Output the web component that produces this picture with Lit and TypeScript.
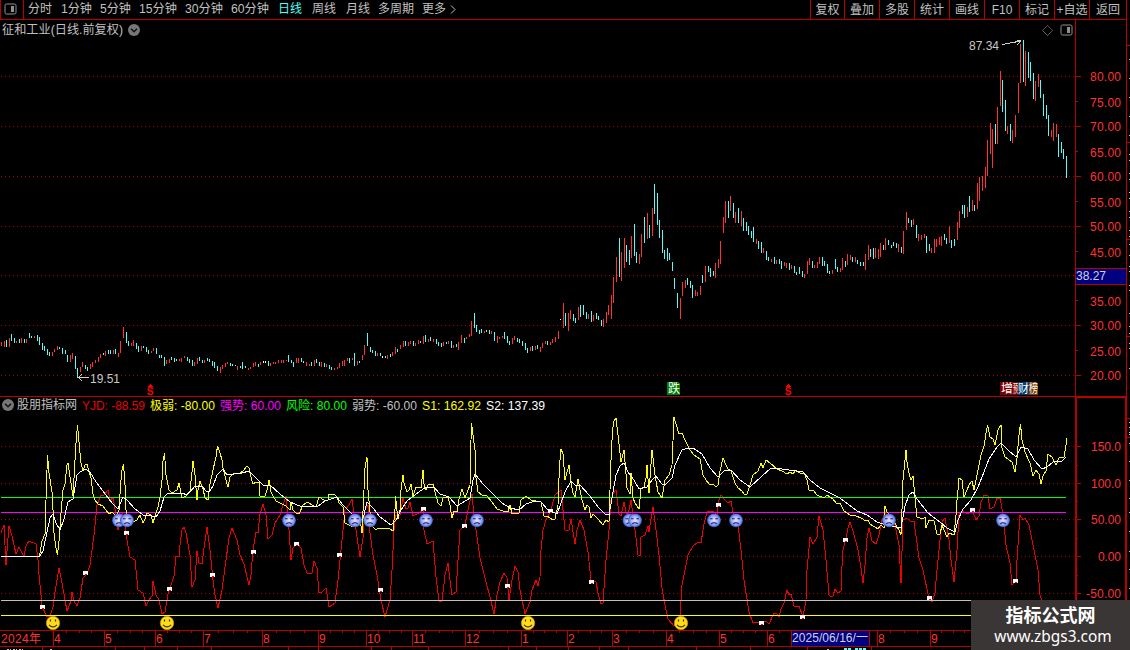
import { LitElement, css, html, svg } from "lit";
import { customElement } from "lit/decorators.js";

const FRAME = "#b80000";
const RED = "#ff3232";
const CYAN = "#54fcfc";

// One bar per session: direction, x, high, low. u = up, d = down, w = unchanged.
const BARS = `
u1,342,346 u4,341,347 d6,340,347 u9,338,347 d11,334,341 d14,338,343 u16,341,343 d19,339,343 u21,338,343 d24,339,343 u26,339,343 d29,333,338
d31,336,338 u34,336,338 d37,335,341 d39,337,345 d42,343,350 d44,346,351 d47,349,355 d49,352,356 u52,352,356 u54,349,352 u57,346,350 d59,347,349
d62,348,354 d65,350,354 d67,355,362 u70,355,362 u72,353,359 d75,356,369 d77,368,378 u80,367,372 u82,362,367 d85,365,369 d87,367,371 u90,364,369
u92,362,367 u95,360,363 u98,357,362 u100,354,358 d103,353,355 u105,351,356 d108,350,354 d110,350,354 u113,350,354 d115,349,354 u118,353,357
u120,341,353 u123,327,338 d126,332,343 d128,341,346 u131,343,346 u133,340,346 d136,343,349 d138,346,352 u141,346,351 d143,346,348 d146,347,352
d148,350,354 u151,351,353 u153,348,351 d156,348,354 d159,355,358 d161,355,358 d164,357,366 u166,360,364 u169,359,363 d171,357,360 d174,358,362
d176,359,361 u179,359,361 u181,358,362 u184,356,358 d187,357,361 d189,359,363 d192,360,366 u194,362,366 u197,358,364 d199,357,361 d202,360,363
u204,360,363 d207,358,361 d209,359,362 d212,361,366 d214,362,368 d217,366,371 u220,367,373 u222,365,369 u225,363,367 u227,362,364 d230,363,366
d232,364,366 d235,365,366 u237,366,370 d240,366,368 d242,362,369 d245,366,368 u248,368,370 u250,367,369 u253,363,367 u255,362,366 d258,364,367
u260,362,365 w263,361,363 w265,361,363 d268,361,366 u270,363,366 u273,362,364 u275,362,364 u278,360,363 u281,360,363 u283,360,363 u286,360,361
d288,355,362 d291,360,363 d293,362,367 u296,358,363 u298,358,363 d301,358,362 d303,361,363 u306,362,366 u309,364,366 d311,362,366 u314,360,366
d316,359,363 d319,362,366 u321,362,367 d324,363,367 u326,364,367 d329,365,369 d331,367,370 u334,368,370 u337,367,369 u339,363,368 u342,361,366
u344,360,366 u347,358,361 d349,358,363 u352,358,360 d354,353,366 u357,361,365 d359,361,363 u362,355,360 u364,345,355 d367,333,346 d370,347,352
d372,350,353 d375,351,356 u377,353,356 d380,353,356 w382,356,358 d385,356,358 u387,355,359 d390,354,357 u392,352,356 u395,347,354 d397,349,352
u400,345,349 u403,341,347 d405,341,346 u408,342,346 u410,341,344 d413,341,346 u415,343,346 u418,340,344 d420,341,343 u423,336,344 d425,335,342
u428,339,342 d430,337,341 u433,339,342 d436,339,344 d438,342,346 d441,343,347 u443,342,346 d446,342,344 u448,341,344 d451,341,348 u453,345,348
d456,344,347 u458,342,350 u461,335,343 d464,338,343 u466,337,339 u469,334,337 u471,321,336 d474,313,328 d476,325,332 d479,330,334 d481,329,333
u484,331,333 d486,330,332 d489,330,334 u491,331,334 d494,332,341 u497,336,343 u499,337,339 u502,336,338 d504,332,339 d507,336,343 d509,341,345
u512,338,344 u514,336,340 d517,338,342 d519,339,343 d522,341,346 d525,343,350 d527,348,353 u530,347,351 d532,346,351 u535,346,350 d537,345,349
u540,347,352 u542,343,348 u545,341,344 d547,341,345 u550,342,345 u552,339,343 u555,337,342 u558,331,339 w560,319,320 u563,303,328 d565,313,326
u568,313,331 u570,310,319 d573,314,321 d575,318,323 u578,307,320 d580,305,317 d583,305,315 d586,312,319 u588,314,319 d591,311,322 u593,315,321
d596,313,319 d598,316,320 d601,320,326 u603,319,327 u606,312,323 u608,305,315 u611,295,319 u613,277,303 u616,257,282 d619,238,277 u621,252,281
u624,238,268 d626,245,262 d629,250,265 u631,236,258 d634,224,256 d636,252,263 u639,254,264 u641,234,257 d644,217,243 u647,213,239 d649,225,238
u652,208,236 d654,184,214 d657,193,225 d659,220,238 d662,230,253 d664,250,259 d667,248,261 d669,253,260 d672,262,271 d674,278,289 d677,293,308
u680,298,319 u682,282,296 u685,280,288 d687,278,285 d690,281,288 d692,285,298 u695,290,296 u697,292,296 u700,286,295 d702,275,283 u705,266,282
d708,266,272 d710,268,277 d713,271,276 u715,263,278 u718,259,268 u720,241,264 u723,217,233 u725,201,223 d728,201,218 u730,196,211 d733,203,218
u735,212,223 d738,208,223 u741,211,226 d743,218,231 d746,222,231 d748,226,235 d751,231,238 d753,227,242 u756,239,244 d758,241,249 d761,242,253
u763,248,253 d766,251,260 d768,257,261 u771,259,262 d774,257,264 u776,260,264 d779,259,264 d781,261,269 u784,262,266 u786,263,268 d789,263,270
u791,265,269 d794,266,273 d796,272,275 d799,267,274 d802,271,277 u804,274,278 u807,261,274 u809,258,265 d812,261,268 u814,265,268 u817,262,268
u819,257,264 d822,257,266 d824,261,266 d827,264,273 d829,271,274 u832,270,274 d835,259,269 d837,267,272 u840,268,272 u842,258,270 d845,261,267
u847,254,265 u850,255,260 d852,257,262 u855,257,262 d857,260,264 d860,262,266 d863,262,266 u865,254,270 u868,245,260 d870,249,257 d873,248,259
u875,248,258 u878,249,259 u880,243,257 d883,245,250 u885,238,250 d888,240,245 d891,245,248 d893,242,246 d896,243,248 u898,244,252 d901,247,253
u903,231,254 u906,212,230 d908,218,223 d911,220,227 u913,219,225 d916,225,238 u918,234,241 u921,235,240 u924,234,238 d926,236,253 d929,244,251
u931,248,253 u934,239,253 u936,239,247 u939,237,245 u941,236,246 d944,234,240 d946,238,244 u949,226,243 d951,240,248 d954,239,246 u957,222,240
u959,211,228 d962,205,214 d964,205,218 u967,207,217 d969,196,212 u972,200,211 d974,205,211 u977,183,209 u979,177,201 u982,176,191 u985,167,188
u987,140,176 u990,123,154 u992,129,168 d995,124,144 u997,107,144 u1000,71,106 d1002,80,112 d1005,100,131 u1007,126,134 d1010,124,141
u1012,130,143 u1015,115,137 u1018,83,113 u1020,44,83 d1023,40,82 u1025,51,86 d1028,52,78 d1030,62,81 d1033,73,99 u1035,81,101 u1038,74,87
d1040,80,98 d1043,94,116 d1046,105,119 d1048,115,136 u1051,130,137 u1053,123,141 u1056,124,137 d1058,134,157 d1061,142,153 d1063,149,159 d1066,156,178`;

const S1 = `1,556 39,556 40,553 42,541 45,534 46,500 47.5,455 49,473 52,492 53,510 54,533 56,548 57.5,555 59,541 61,513 63,490 65,484 67,465 68,463 70,477
73,496 74,478 76,443 77.5,425 79,442 81,463 83,471 85,465 87,464 89,471 91,478 93,494 95,500 98,504 103,506 106,510 109,514 112,512 116,516 119,510
120,494 121,480 122,470 123.5,464 125,485 126,510 128,519 133,522 137,520 140,515 143,523 145,519 147,513 151,515 153,523 155,516 158,507 160,497
162,480 163,461 164.5,453 166,475 169,490 172,493 177,490 179,483 182,498 186,496 190,491 192,472 193,461 195,475 197,500 198,490 200,481 203,489
205,498 208,500 210,484 213,470 216,457 217.5,446 220,453 222,460 223,468 226,480 228,487 230,477 234,473 240,473 243,471 247,466 249,468 251,477
253,484 256,482 259,482 260,496 265,496 267,490 269,480 271,492 273,496 276,501 280,503 286,506 290,510 291,502 293,510 296,513 299,514 303,505
308,502 312,505 316,507 319,497 324,500 328,500 329,494 334,494 337,497 339,503 343,507 345,523 349,525 354,527 359,525 360,518 362,533 364,490
365,468 367,457 368,490 370,512 372,526 375,529 377,529 381,528 390,529 393,531 395,510 395.5,496 397,511 398,519 400,510 401,490 403,475 404,483
407,492 409,490 411,484 413,496 416,487 421,488 423,470 424,484 426,490 428,485 433,484 435,492 438,503 441,506 443,498 448,497 450,505 452,518
454,511 457,512 459,499 462,489 465,498 470,485 471,440 471.5,423 473,435 475,450 476,478 478,492 482,495 487,496 492,502 497,509 503,511 508,512
510,505 512,514 519,513 521,500 526,496 531,500 541,502 544,516 547,516 553,520 555,519 558,505 559.5,465 561,449 563,454 565,480 569,465 571,482
573,493 575,497 578,479 582,500 585,510 587,505 589,507 591,518 593,514 598,519 603,525 606,520 609,522 610,490 611,460 612,440 613,427 614,421
616,418 618,435 621,462 624,450 626,474 627,488 630,494 631,473 633,498 635,503 639,509 641,489 644,487 646,478 647,465 649,493 652,450 655,475
658,492 662,498 665,480 669,475 672,465 674,417 676,424 679,434 682,433 685,440 690,450 694,455 700,459 703,475 706,480 709,484 713,484 716,487
718,485 720,471 723,458 726,465 728,469 731,471 735,483 738,488 742,491 744,494 747,494 750,485 753,475 758,471 761,463 763,468 766,460 770,463
777,469 782,471 787,474 790,472 793,474 796,470 800,473 804,473 807,480 809,490 813,490 817,495 824,498 827,495 833,499 836,503 840,503 844,511
850,515 856,516 861,518 866,521 868,520 870,524 878,529 881,525 884,528 885,506 887,512 890,515 894,522 899,530 901,535 902,510 903,480 904,470
906,450 907,462 909,473 911,480 913,476 915,498 917,517 923,519 925,517 926,528 929,520 934,521 937,534 940,534 942,525 947,537 949,533 954,535
956,515 957,500 958,490 959,478 962,480 964,497 967,490 969,485 972,481 974,490 978,470 981,455 984,446 985,440 986,433 987.5,425 990,437 993,439
995,445 998,430 1001,425 1002,448 1005,457 1012,462 1015,472 1017,458 1019,435 1020.5,424 1022,440 1025,452 1030,463 1033,476 1036,470 1039,474
1041,484 1043,476 1046,471 1048,454 1052,457 1056,465 1059,458 1064,457 1066,445 1067,438`;

const S2 = `1,556 40,556 43,551 47,532 50,518 53,514 56,523 60,530 64,519 68,502 73,499 77,475 80,472 86,469 90,472 96,482 106,495 112,503 118,509 123,497
128,501 134,508 143,515 152,516 156,517 160,511 164,497 168,493 177,494 183,493 186,495 190,492 195,486 198,487 202,486 206,491 209,492 213,486
217,475 223,469 227,475 242,473 249,471 255,477 263,485 270,485 280,494 290,502 302,507 311,506 318,506 325,501 337,497 343,505 350,512 358,519
363,519 367,502 373,508 380,517 391,525 396,520 401,510 407,501 416,494 426,487 434,487 440,494 449,497 457,506 462,503 470,498 473,480 475,474
483,484 492,493 502,503 510,508 519,510 526,504 535,501 541,502 548,510 557,514 561,503 565,492 571,481 576,486 580,485 590,496 598,507 605,514
609,515 612,498 616,475 620,466 624,463 628,472 634,480 639,489 647,487 652,480 656,476 662,484 666,484 672,478 675,465 682,450 688,448 693,448
702,454 710,468 718,477 725,470 731,470 740,480 750,487 762,476 771,468 782,469 803,472 810,480 820,488 830,493 840,498 857,511 867,515 877,522
883,524 889,525 896,527 901,528 905,506 909,495 913,492 917,499 928,513 940,522 947,528 955,532 958,520 963,509 971,500 978,487 984,472 989,459
993,453 997,447 1001,443 1008,450 1016,457 1021,447 1028,449 1034,460 1042,469 1047,467 1053,462 1062,461 1066,457`;

const YJD = `1,533 4,525 6,565 8,538 9,526 12,536 16,554 19,547 24,557 26,546 29,541 36,544 38,560 39,575 42,605 46,616 50,616 53,607 55,592 59,568
62,583 67,611 71,601 72,592 74,601 77,606 80,598 83,578 87,574 90,565 94,535 97,505 101,495 104,495 108,490 110,500 113,498 116,514 118,530 120,512
122,512 125,525 127,540 130,557 135,560 138,590 143,593 146,606 149,600 152,596 153,581 156,595 159,600 162,614 165,612 168,594 171,585 174,576
176,556 179,557 180,545 182,530 184,527 186,533 190,555 192,587 195,580 197,551 199,563 202,564 204,548 207,527 210,550 213,580 215,595 218,608
222,590 226,560 229,538 232,528 237,540 240,555 244,564 249,585 251,575 253,550 256,532 258,533 260,514 263,504 266,515 268,539 272,535 275,523
280,515 283,505 286,496 289,530 291,560 293,548 297,543 301,548 304,565 307,573 312,573 314,561 317,568 319,593 322,592 326,588 329,607 335,603
338,580 341,550 343,530 345,510 349,505 352,499 354,515 356,530 360,557 363,538 365,510 368,505 369,525 373,555 377,575 381,600 385,617 390,600
392,570 394,530 396,515 400,515 403,498 406,509 408,508 410,502 413,516 417,514 423,510 424,530 427,544 433,541 436,577 439,601 442,601 445,575
448,563 450,580 452,595 456,592 458,560 460,530 465,525 469,505 472,494 474,515 476,530 480,558 485,578 490,597 494,614 497,595 500,582 504,573
507,578 509,600 512,580 515,566 518,572 520,590 525,614 530,602 532,590 536,580 538,586 540,577 541,550 543,530 546,520 551,510 555,495 561,490
562,500 565,530 569,530 571,519 575,544 577,530 580,520 584,530 588,552 591,580 596,582 598,593 601,604 603,603 606,560 609,530 611,500 613,494
616,490 619,514 621,516 624,502 626,512 628,515 631,500 633,515 635,530 638,555 640,556 641,537 645,535 648,526 649,532 651,519 653,507 656,530
659,555 662,588 665,605 668,619 674,626 680,618 682,585 685,570 688,555 693,546 698,542 701,543 704,524 707,512 713,511 717,515 718,503 721,495
725,500 728,503 731,501 734,518 738,525 741,550 744,580 749,612 753,623 759,622 762,623 766,621 769,624 774,613 777,614 779,617 781,609 784,603
787,590 789,595 791,594 794,606 799,606 803,617 806,600 807,570 810,537 813,544 817,537 819,516 823,530 826,560 829,595 831,597 833,596 835,589
838,593 841,591 841.5,575 843,550 846,538 848,528 850,522 853,531 858,550 861,568 863,583 865,565 867,538 869,528 872,541 876,544 879,535 882,520
885,513 895,525 899,545 901,583 903,520 907,518 910,521 914,521 919,558 923,570 928,594 932,602 935,593 937,570 940,540 942,522 945,518 949,540
951,560 954,582 957,550 959,515 962,511 966,513 969,513 973,512 976,520 979,516 981,502 984,495 988,496 990,509 994,507 997,498 1000,498 1003,514
1006,545 1010,563 1012,585 1016,581 1017,560 1020,515 1023,520 1025,518 1029,525 1033,545 1038,570 1040,595 1042,601`;

const SIGNALS = [[42, 607], [85, 573], [126, 533], [169, 589], [212, 575], [253, 552], [296, 544], [339, 555], [380, 590], [423, 509], [464, 526],
  [507, 586], [550, 511], [591, 582], [718, 505], [761, 623], [802, 617], [845, 540], [929, 598], [972, 510], [1015, 581]];
const SAD = [119, 127, 289, 355, 370, 426, 477, 629.5, 635, 714, 736, 889, 1003];
const HAPPY = [53, 167, 528, 681];

const PRICE_GRID = [76, 126, 176, 226, 275, 325, 375];
const VALUE_GRID = [446, 483, 519, 556, 593];
const PRICE_LABELS: [string, number][] = [["80.00", 76], ["75.00", 102], ["70.00", 126], ["65.00", 152], ["60.00", 176], ["55.00", 202],
  ["50.00", 226], ["45.00", 252], ["35.00", 301], ["30.00", 325], ["25.00", 351], ["20.00", 375]];
const VALUE_LABELS: [string, number, number][] = [["150.0", 446, 30], ["100.0", 483, 30], ["50.00", 519, 30], ["0.00", 556, 23], ["-50.00", 593, 35]];
const MONTHS: [string, number][] = [["4", 53], ["5", 104], ["6", 155], ["7", 203], ["8", 262], ["9", 318], ["10", 366], ["11", 412], ["12", 465],
  ["1", 521], ["2", 567], ["3", 612], ["4", 666], ["5", 719], ["6", 767], ["8", 877], ["9", 930]];
// Label, text width, distance to the next label.
const PERIODS: [string, number, number][] = [["分时", 24, 33], ["1分钟", 31, 39], ["5分钟", 31, 39], ["15分钟", 38, 46], ["30分钟", 38, 46],
  ["60分钟", 38, 47], ["日线", 24, 34], ["周线", 24, 34], ["月线", 24, 32], ["多周期", 36, 44], ["更多", 24, 28]];
const TOOLS: [string, number][] = [["复权", 34], ["叠加", 35], ["多股", 35], ["统计", 35], ["画线", 35], ["F10", 35], ["标记", 35], ["+自选", 35], ["返回", 37]];
const READOUTS: [string, string, number][] = [["YJD: -88.59", "#e80000", 68], ["极弱: -80.00", "#ffff00", 70], ["强势: 60.00", "#ff00ff", 66],
  ["风险: 80.00", "#00ff00", 66], ["弱势: -60.00", "#c0c0c0", 70], ["S1: 162.92", "#ffff00", 64], ["S2: 137.39", "#ffffff", 64]];

const barPath = (kind: string) =>
  BARS.trim().split(/\s+/).filter((b) => b[0] === kind).map((b) => {
    const [x, top, bottom] = b.slice(1).split(",").map(Number);
    return `M${x + 0.5} ${top}V${bottom}`;
  }).join("");

const gridLines = (ys: number[]) =>
  ys.map((y) => svg`<path class="grid" d="M1 ${y + 0.5}H1075" /><path class="frame" d="M1076 ${y + 0.5}h5" />`);

const edgeMarks = (white: number[], red: number[]) => svg`
  <path stroke="#c8c8c8" d=${white.map((y) => `M1129 ${y + 0.5}h1`).join("")} />
  <path class="frame" d=${red.map((y) => `M1127 ${y + 0.5}h3`).join("")} />`;

const sadFace = (x: number) => svg`<g transform="translate(${x} 520.3)">
  <circle r="6.9" fill="url(#blue)" />
  <path fill="none" stroke="#141c50" stroke-width="1.1" d="M-4 -1.6h2.6M1.4 -1.6h2.6M-2.8 3.6Q0 1.4 2.8 3.6" />
</g>`;

const happyFace = (x: number) => svg`<g transform="translate(${x} 623)">
  <circle r="6.7" fill="#ffdc18" stroke="#c89c10" stroke-width=".7" />
  <path fill="none" stroke="#403000" stroke-width="1.2" d="M-2.5 -3.4v2M2.5 -3.4v2M-4 1.8Q0 6 4 1.8" />
</g>`;

const splitIcon = html`<svg width="13" height="12" viewBox="0 0 13 12">
  <rect x="1" y="1" width="11" height="10" rx="1.5" fill="none" stroke="#909090" /><rect x="7" y="3" width="3" height="6" fill="#909090" />
</svg>`;

const chevron = html`<svg width="12" height="12" viewBox="0 0 12 12">
  <circle cx="6" cy="6" r="6" fill="#777" /><path d="M3 4.7l3 3 3-3" fill="none" stroke="#111" stroke-width="1.5" />
</svg>`;

@customElement("app-root")
export class AppRoot extends LitElement {
  static styles = css`
    :host {
      display: flex; flex-direction: column; position: relative; width: 1130px; height: 650px; overflow: hidden;
      background: #000; color: #c0c0c0; font: 12px/16px "Liberation Sans", "Noto Sans CJK SC", sans-serif;
    }
    svg { display: block; flex: none; }
    .toolbar { display: flex; flex: none; height: 20px; width: 1127px; box-sizing: border-box; border-bottom: 1px solid #b80000; border-right: 1px solid #b80000; white-space: nowrap; line-height: 20px; }
    .menu { display: flex; align-items: center; box-sizing: border-box; width: 24px; padding: 0 0 2px 3px; border: solid #b80000; border-width: 0 1px; }
    .periods { display: flex; padding-left: 4px; flex: 1; }
    .item { display: block; flex: none; }
    .item.active { color: #54fcfc; }
    .fit { overflow: visible; }
    .more { margin-top: 5px; }
    .tools { display: flex; }
    .tool { box-sizing: border-box; border-left: 1px solid #b80000; text-align: center; }
    .title { display: flex; align-items: center; flex: none; height: 20px; width: 1127px; box-sizing: border-box; border-right: 1px solid #b80000; }
    .heading { display: flex; align-items: center; gap: 5px; flex: 1; padding-left: 2px; }
    .corner { display: flex; align-items: center; gap: 7px; width: 33px; height: 20px; border-right: 1px solid #b80000; }
    .axis-gap { width: 50px; }
    .readouts { display: flex; align-items: center; flex: none; width: 1127px; height: 18px; box-sizing: border-box; border: solid #b80000; border-width: 1px 1px 0 0; white-space: nowrap; }
    .name { display: flex; align-items: center; gap: 3px; width: 80px; padding-left: 2px; padding-bottom: 1px; }
    .values { display: flex; flex: 1; }
    .axis-top { box-sizing: border-box; width: 51px; align-self: stretch; border: solid #b80000; border-width: 1px 1px 0 2px; }
    .plot { shape-rendering: crispEdges; font: 12px "Liberation Sans", "Noto Sans CJK SC", sans-serif; }
    .smooth { shape-rendering: geometricPrecision; }
    .line { fill: none; stroke-width: 1; }
    .grid { stroke: #a80000; stroke-dasharray: 1 3; fill: none; }
    .frame { stroke: #b80000; fill: none; }
    .label { fill: #ff3232; }
    .brand { position: absolute; left: 971px; top: 600px; width: 159px; height: 50px; background: #3b3636; color: #fff; text-align: center; }
    .brand-name { font: bold 18px/24px "Noto Sans CJK SC", sans-serif; padding-top: 2px; }
    .brand-url { font: 15.4px/18px "Noto Sans", sans-serif; padding: 2px 0 0 5px; }
  `;

  private text(content: string, width: number, color = "currentColor", y = 13) {
    return html`<svg class="fit" width=${width} height="18"><text y=${y} fill=${color} textLength=${width} lengthAdjust="spacingAndGlyphs">${content}</text></svg>`;
  }

  private toolbar() {
    return html`<div class="toolbar">
      <div class="menu">${splitIcon}</div>
      <div class="periods">
        ${PERIODS.map(([label, width, pitch]) => html`<span class="item ${label === "日线" ? "active" : ""}" style="width:${pitch}px">${this.text(label, width)}</span>`)}
        <svg class="more" width="6" height="9" viewBox="0 0 6 9"><path d="M1 .5l4 4-4 4" fill="none" stroke="#c0c0c0" /></svg>
      </div>
      <div class="tools">${TOOLS.map(([label, width]) => html`<div class="tool" style="width:${width}px">${label}</div>`)}</div>
    </div>`;
  }

  private pricePanel() {
    return html`<svg class="plot" width="1130" height="356" viewBox="0 40 1130 356">
      ${gridLines(PRICE_GRID)}
      <path class="frame" d="M1075.5 40V396M1126.5 40V396" />
      ${[101, 151, 201, 251, 300, 350].map((y) => svg`<path class="frame" d="M1076 ${y + 0.5}h2" />`)}
      <path class="line" stroke=${RED} d=${barPath("u")} />
      <path class="line" stroke=${CYAN} d=${barPath("d")} />
      <path class="line" stroke="#fff" d=${barPath("w")} />
      <text x="969" y="50" fill="#c8c8c8" textLength="30">87.34</text>
      <path class="line" stroke="#d0d0d0" d="M1002 44.5L1021 41M1015 39.5L1021 41L1017 45" />
      <text x="90" y="383" fill="#c8c8c8" textLength="30">19.51</text>
      <path class="line" stroke="#d0d0d0" d="M78 377.5H89M82 374L78.5 377.5L82 381" />
      ${[150, 788].map((x) => svg`<path fill="#f00" d="M${x - 3} 387L${x} 384L${x + 3} 387Z" /><text x=${x} y="395" fill="#f00" font-size="10" font-weight="bold" text-anchor="middle">S</text>`)}
      <path fill="#008000" d="M667 382h11l2 2v11h-13z" /><text x="668" y="393" fill="#fff">跌</text>
      <rect x="1000" y="382" width="18" height="13" fill="#800000" /><rect x="1018" y="382" width="12" height="13" fill="#003c6c" />
      <path fill="#804000" d="M1029 382h7l2 2v11h-9z" />
      <text x="1001" y="393" fill="#fff">增</text>
      <text x="1013" y="393" fill="#fff" textLength="5" lengthAdjust="spacingAndGlyphs">预</text>
      <text x="1018" y="393" fill="#fff" textLength="11" lengthAdjust="spacingAndGlyphs">财</text>
      <text x="1029" y="393" fill="#fff" textLength="9" lengthAdjust="spacingAndGlyphs">榜</text>
      ${PRICE_LABELS.map(([t, y]) => svg`<text class="label" x="1090" y=${y + 5} textLength="31">${t}</text>`)}
      <path fill="#000080" stroke=${FRAME} d="M1075.5 268.5h51v16h-51z" />
      <text x="1076" y="280" fill="#d0d0e0" textLength="30">38.27</text>
      ${edgeMarks([59, 78, 97, 116, 135, 154, 160, 173, 179, 192, 198, 211, 217, 230, 236, 244, 255, 266, 271, 285, 290, 313, 326, 333, 343, 348, 368], [45, 142, 239, 336])}
    </svg>`;
  }

  private indicatorPanel() {
    return html`<svg class="plot" width="1130" height="216" viewBox="0 414 1130 216">
      <defs><radialGradient id="blue" cx=".5" cy=".5"><stop offset="0" stop-color="#ecdcfc" /><stop offset=".5" stop-color="#b0b8f8" /><stop offset=".8" stop-color="#6c8cec" /><stop offset="1" stop-color="#2c4cb0" /></radialGradient></defs>
      ${gridLines(VALUE_GRID)}
      <path d="M1076 414V630M1126 414V630" stroke=${FRAME} stroke-width="2" />
      ${[465, 501, 538, 575].map((y) => svg`<path class="frame" d="M1076 ${y + 0.5}h2" />`)}
      <path class="line" stroke="#f00000" d="M${YJD}" />
      <path class="line" stroke="#00ff00" d="M1 497.5H1066" />
      <path class="line" stroke="#ff00ff" d="M1 512.5H1066" />
      <path class="line" stroke="#c0c0c0" d="M1 600.5H1066" />
      <path class="line" stroke="#ffff00" d="M1 615.5H1066" />
      <path class="line" stroke="#ffff00" d="M${S1}" />
      <path class="line" stroke="#ffffff" d="M${S2}" />
      ${SIGNALS.map(([x, y]) => svg`<path fill="#fff" d="M${x - 2} ${y - 2}h5v4h-5z" /><path stroke="#f00" d="M${x} ${y + 1.5}h2" />`)}
      ${SAD.map((x) => svg`<g class="smooth">${sadFace(x)}</g>`)}
      ${HAPPY.map((x) => svg`<g class="smooth">${happyFace(x)}</g>`)}
      ${VALUE_LABELS.map(([t, y, w]) => svg`<text class="label" x=${1121 - w} y=${y + 5} textLength=${w}>${t}</text>`)}
      ${edgeMarks([422, 427, 432, 434, 443, 461, 480, 498, 512, 531, 551, 569, 588], [418, 437])}
    </svg>`;
  }

  private timeAxis() {
    const ticks = MONTHS.flatMap(([, x], i) => {
      const next = MONTHS[i + 1]?.[1] ?? 975;
      return x === 767 ? [779] : [0.25, 0.5, 0.75].map((f) => Math.round(x + (next - x) * f));
    });
    return html`<svg class="plot" width="1130" height="20" viewBox="0 630 1130 20">
      <path class="frame" d="M0 630.5H1130M0 646.5H1130" />
      ${MONTHS.map(([t, x]) => svg`<path class="frame" d="M${x + 0.5} 630v16" /><text class="label" x=${x + 1} y="643">${t}</text>`)}
      ${ticks.map((x) => svg`<path class="frame" d="M${x + 0.5} 631v2" />`)}
      ${[42, 115, 144, 177, 211, 288, 318, 371, 391, 428, 508, 536, 568, 599, 628, 696, 750, 807, 871].map((x) => svg`<path class="frame" d="M${x + 0.5} 647v3" />`)}
      <text class="label" x="1" y="643" textLength="40">2024年</text>
      <rect x="791.5" y="630.5" width="78" height="16" fill="#000080" stroke=${FRAME} />
      <text x="792" y="642" fill="#d0d0e0" textLength="76">2025/06/16/一</text>
      <path stroke="#c0c0c0" stroke-dasharray="2 1 1 2" d="M7 649.5h16M50 649.5h3M827 649.5h3" />
      <path stroke="#54fcfc" stroke-width="2" stroke-dasharray="3 1" d="M844 649h8M855 649h11" />
    </svg>`;
  }

  render() {
    return html`
      ${this.toolbar()}
      <div class="title">
        <div class="heading">${this.text("征和工业(日线.前复权)", 121)}${chevron}</div>
        <div class="corner">
          <svg width="11" height="11" viewBox="0 0 11 11"><path d="M5.5 .5l5 5-5 5-5-5z" fill="none" stroke="#909090" stroke-dasharray="1 .5" /></svg>
          ${splitIcon}
        </div>
        <div class="axis-gap"></div>
      </div>
      ${this.pricePanel()}
      <div class="readouts">
        <div class="name">${chevron}${this.text("股朋指标网", 60)}</div>
        <div class="values">${READOUTS.map(([t, color, pitch]) => html`<span class="item" style="width:${pitch}px">${this.text(t, pitch - 5, color, 12.5)}</span>`)}</div>
        <div class="axis-top"></div>
      </div>
      ${this.indicatorPanel()}
      ${this.timeAxis()}
      <div class="brand"><div class="brand-name">指标公式网</div><div class="brand-url">www.zbgs3.com</div></div>
    `;
  }
}
